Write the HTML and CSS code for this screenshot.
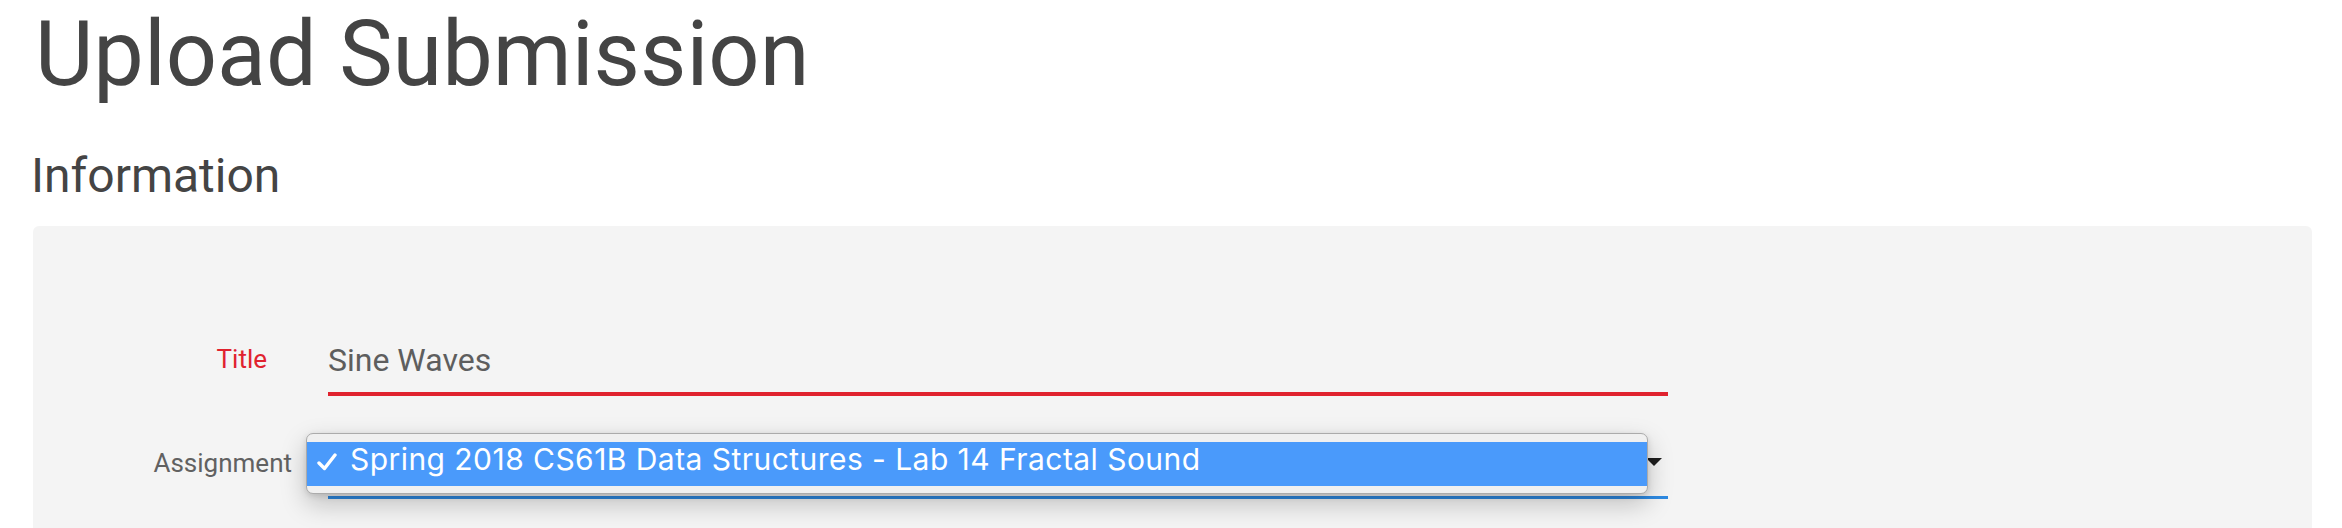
FILE: index.html
```html
<!DOCTYPE html>
<html lang="en">
<head>
<meta charset="utf-8">
<title>Upload Submission</title>
<link rel="stylesheet" href="styles.css">
</head>
<body>
<main class="page">
  <h1 class="page-title">Upload Submission</h1>
  <h2 class="section-title">Information</h2>
  <section class="card">
    <div class="form-row">
      <label class="field-label label-title">Title</label>
      <div class="field field-text">Sine Waves</div>
    </div>
    <div class="form-row">
      <label class="field-label label-assignment">Assignment</label>
      <div class="field field-select">
        <span class="select-arrow"></span>
        <div class="popup">
          <div class="popup-item">
            <svg class="check" width="20" height="18" viewBox="0 0 20 18"><path d="M2 10 L7.5 15.5 L18 2" fill="none" stroke="#fff" stroke-width="3.4" stroke-linecap="round" stroke-linejoin="round"/></svg>
            <span class="popup-text">Spring 2018 CS61B Data Structures - Lab 14 Fractal Sound</span>
          </div>
        </div>
      </div>
    </div>
  </section>
</main>
</body>
</html>
```

FILE: styles.css
```css
html, body {
  margin: 0;
  padding: 0;
  background: #ffffff;
}

.page {
  padding: 10px 30px 0 33px;
  font-family: Roboto, "Liberation Sans", sans-serif;
  color: #444444;
}

.page-title {
  margin: 0 0 0 2px;
  font-size: 90px;
  line-height: 90px;
  font-weight: 400;
  color: #444444;
}

.section-title {
  margin: 52px 0 0 -2px;
  font-size: 48px;
  line-height: 48px;
  font-weight: 400;
  color: #444444;
}

.card {
  margin-top: 26px;
  background: #f4f4f4;
  border-radius: 6px;
  padding-top: 116px;
  min-height: 400px;
}

.form-row {
  display: flex;
  align-items: flex-start;
  margin-bottom: 48px;
}

.field-label {
  width: 259px;
  margin-right: 36px;
  flex: none;
  box-sizing: border-box;
  text-align: right;
  font-size: 26px;
  line-height: 30px;
  color: #616161;
}

.label-title {
  color: #e0222e;
  padding-right: 25px;
  margin-top: 2px;
}

.label-assignment {
  margin-top: 4px;
}

.field {
  width: 1340px;
  flex: none;
  font-size: 32px;
  line-height: 36px;
  color: #5e5e5e;
}

.field-text {
  padding-bottom: 14px;
  border-bottom: 4px solid #e0222e;
}

.field-select {
  position: relative;
  height: 36px;
  padding-bottom: 16px;
  border-bottom: 3px solid #2e8ae2;
}

.select-arrow {
  position: absolute;
  right: 6px;
  top: 14px;
  width: 0;
  height: 0;
  border-left: 8px solid transparent;
  border-right: 8px solid transparent;
  border-top: 8px solid #1e1e1e;
}

.popup {
  position: absolute;
  left: -22px;
  top: -11px;
  width: 1342px;
  box-sizing: border-box;
  height: 61px;
  padding: 8px 0 0;
  background: #f0f0f0;
  border: 1px solid #ababab;
  border-radius: 7px;
  box-shadow: 0 10px 26px rgba(0, 0, 0, 0.22), 0 2px 6px rgba(0, 0, 0, 0.12);
  z-index: 2;
}

.popup-item {
  display: flex;
  align-items: flex-start;
  height: 44px;
  background: #4a9afb;
  color: #ffffff;
}

.check {
  flex: none;
  margin: 11px 0 0 10px;
}

.popup-text {
  margin-left: 13px;
  font-family: Inter, "Noto Sans", sans-serif;
  font-size: 30px;
  line-height: 34px;
  letter-spacing: 0.45px;
  white-space: nowrap;
}
```
